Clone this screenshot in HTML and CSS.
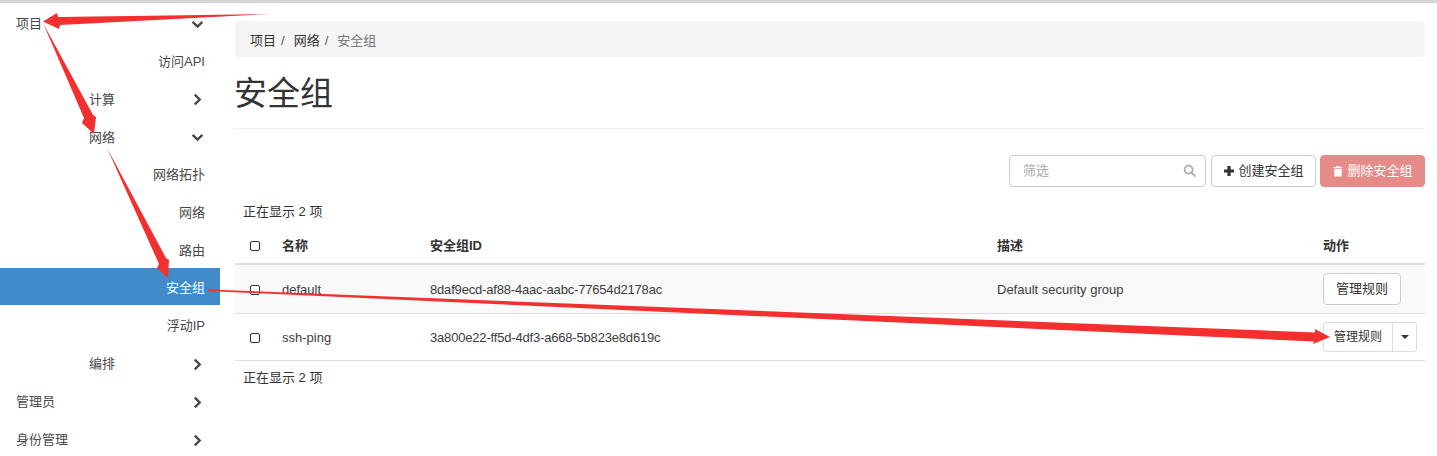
FILE: index.html
```html
<!DOCTYPE html>
<html lang="zh">
<head>
<meta charset="utf-8">
<title>安全组</title>
<link rel="stylesheet" href="styles.css">
</head>
<body>
<div class="page">
  <nav class="sidebar">
    <div class="row lvl1"><span class="label">项目</span><svg class="chev" viewBox="0 0 12 12"><path d="M1.5 3.5 6 8l4.5-4.5"/></svg></div>
    <div class="row lvl3"><span class="label">访问API</span></div>
    <div class="row lvl2"><span class="label">计算</span><svg class="chev" viewBox="0 0 12 12"><path d="M3.5 1.5 8 6l-4.5 4.5"/></svg></div>
    <div class="row lvl2"><span class="label">网络</span><svg class="chev" viewBox="0 0 12 12"><path d="M1.5 3.5 6 8l4.5-4.5"/></svg></div>
    <div class="row lvl3"><span class="label">网络拓扑</span></div>
    <div class="row lvl3"><span class="label">网络</span></div>
    <div class="row lvl3"><span class="label">路由</span></div>
    <div class="row lvl3 active"><span class="label">安全组</span></div>
    <div class="row lvl3"><span class="label">浮动IP</span></div>
    <div class="row lvl2"><span class="label">编排</span><svg class="chev" viewBox="0 0 12 12"><path d="M3.5 1.5 8 6l-4.5 4.5"/></svg></div>
    <div class="row lvl1"><span class="label">管理员</span><svg class="chev" viewBox="0 0 12 12"><path d="M3.5 1.5 8 6l-4.5 4.5"/></svg></div>
    <div class="row lvl1"><span class="label">身份管理</span><svg class="chev" viewBox="0 0 12 12"><path d="M3.5 1.5 8 6l-4.5 4.5"/></svg></div>
  </nav>
  <main class="main">
    <ol class="breadcrumb">
      <li>项目</li><li class="sep">/</li><li>网络</li><li class="sep">/</li><li class="current">安全组</li>
    </ol>
    <h1 class="title">安全组</h1>
    <div class="toolbar">
      <div class="search">
        <span class="placeholder">筛选</span>
        <svg class="search-icon" viewBox="0 0 14 14"><circle cx="5.6" cy="5.6" r="4"/><path d="m8.6 8.6 4 4"/></svg>
      </div>
      <button class="btn">
        <svg class="btn-icon" viewBox="0 0 12 12"><path class="solid" d="M4.4 1h3.2v3.4H11v3.2H7.6V11H4.4V7.6H1V4.4h3.4z"/></svg>创建安全组
      </button>
      <button class="btn danger">
        <svg class="btn-icon" viewBox="0 0 12 12"><path class="white" d="M4.4 1h3.2l.5 1H10.500v1.200H1.500V2h2.400zM2.300 4h7.400v6.500a1 1 0 0 1-1 1H3.300a1 1 0 0 1-1-1z"/></svg>删除安全组
      </button>
    </div>
    <div class="count">正在显示 2 项</div>
    <table class="grid">
      <thead>
        <tr>
          <th class="c-check"><span class="check"></span></th>
          <th class="c-name">名称</th>
          <th class="c-id">安全组ID</th>
          <th class="c-desc">描述</th>
          <th class="c-act">动作</th>
        </tr>
      </thead>
      <tbody>
        <tr class="odd">
          <td class="c-check txt"><span class="check"></span></td>
          <td class="txt">default</td>
          <td class="txt uuid">8daf9ecd-af88-4aac-aabc-77654d2178ac</td>
          <td class="txt">Default security group</td>
          <td><button class="btn rule">管理规则</button></td>
        </tr>
        <tr class="even">
          <td class="c-check txt"><span class="check"></span></td>
          <td class="txt">ssh-ping</td>
          <td class="txt uuid">3a800e22-ff5d-4df3-a668-5b823e8d619c</td>
          <td class="txt"></td>
          <td>
            <div class="split"><button class="split-main">管理规则</button><button class="split-caret"><span class="caret"></span></button></div>
          </td>
        </tr>
      </tbody>
    </table>
    <div class="count foot">正在显示 2 项</div>
  </main>
</div>
<svg class="arrows" viewBox="0 0 1437 456">
  <polygon points="43,21.500 57,13 58,17 270,14 60,25 59,29"/>
  <polygon points="43,23 84,118 82,123 94,134 96,117 93,115"/>
  <polygon points="107,148 159,264 157,268 168,278 169,260 166,258"/>
  <polygon points="208,289.500 1315,332.500 1315,329 1330,337 1313,344 1314,341.500 208,291"/>
</svg>
</body>
</html>
```
FILE: styles.css
```css
* { box-sizing: border-box; }
html, body { margin: 0; padding: 0; }
body {
  width: 1437px;
  height: 456px;
  overflow: hidden;
  background: #fff;
  color: #333;
  font: 13px/1.43 "Liberation Sans", "Noto Sans CJK SC", sans-serif;
  border-top: 3px solid #d4d4d4;
  position: relative;
}
.page { display: flex; align-items: flex-start; }

.sidebar { width: 220px; flex: none; color: #484848; }
.row { display: flex; align-items: center; height: 37.8px; padding-top: 5px; padding-right: 15px; overflow: hidden; }
.lvl1 { padding-left: 16px; justify-content: space-between; }
.lvl2 { padding-left: 89px; justify-content: space-between; }
.lvl3 { justify-content: flex-end; }
.active { background: #428bca; color: #fff; padding-top: 3px; }
.chev { width: 13px; height: 13px; margin-left: auto; margin-right: 1px; fill: none; stroke: #484848; stroke-width: 2.200; }

.main { width: 1190px; margin-left: 15px; flex: none; }
.breadcrumb {
  display: flex;
  gap: 5px;
  list-style: none;
  margin: 18px 0 0;
  padding: 4px 15px 0;
  height: 36px;
  align-items: center;
  background: #f5f5f5;
  border-radius: 4px;
}
.breadcrumb .sep { color: #555; margin-right: 4px; }
.breadcrumb .current { color: #777; }
.title {
  margin: 0 0 0 -1px;
  height: 72px;
  padding-top: 14px;
  font-size: 33px;
  font-weight: 400;
  line-height: 46px;
  border-bottom: 1px solid #eee;
  color: #333;
}
.toolbar { display: flex; justify-content: flex-end; gap: 5px; margin-top: 26px; }
.search {
  width: 197px;
  height: 32px;
  display: flex;
  align-items: center;
  justify-content: space-between;
  padding: 0 8px 0 13px;
  border: 1px solid #ccc;
  border-radius: 4px;
  color: #aaa;
}
.search-icon { width: 14px; height: 14px; fill: none; stroke: #aaa; stroke-width: 1.800; }
.btn {
  display: inline-flex;
  align-items: center;
  justify-content: center;
  height: 32px;
  width: 105px;
  padding: 0;
  border: 1px solid #ccc;
  border-radius: 4px;
  background: #fff;
  color: #333;
  font: inherit;
}
.btn-icon { width: 12px; height: 12px; margin-right: 3px; }
.solid { fill: #333; }
.white { fill: #fff; }
.danger { margin-left: -1px; background: #e58b89; border-color: #e58b89; color: #fff; }

.count { margin: 15px 0 0 8px; line-height: 19px; }
.foot { margin-top: 7px; }

.grid { width: 1190px; table-layout: fixed; border-collapse: collapse; margin-top: 8px; color: #3c3c3c; }
.grid th, .grid td { padding: 0 8px; text-align: left; vertical-align: middle; }
.grid th { height: 35px; font-weight: 700; border-bottom: 2px solid #ddd; color: #333; }
.grid td { border-bottom: 1px solid #ddd; }
.grid td.txt { padding-top: 3px; }
.uuid { letter-spacing: -0.18px; }
.odd td { height: 49px; background: #f9f9f9; }
.even td { height: 47px; }
.c-check { width: 39px; padding-left: 15px !important; padding-right: 0 !important; }
.c-name { width: 148px; }
.c-id { width: 567px; }
.c-desc { width: 326px; }
.c-act { width: 110px; }
.check {
  display: block;
  width: 10px;
  height: 10px;
  border: 1px solid #333;
  border-radius: 2px;
  background: #fff;
}
.rule { width: 78px; padding-top: 2px; }
.split { display: flex; width: 94px; height: 30px; }
.split-main, .split-caret {
  height: 30px;
  padding: 0;
  background: #fff;
  color: #333;
  font: inherit;
  font-size: 12px;
  border: 1px solid #ddd;
}
.split-main { width: 70px; border-radius: 3px 0 0 3px; padding-top: 2px; }
.split-caret { width: 25px; margin-left: -1px; border-radius: 0 3px 3px 0; display: flex; align-items: center; justify-content: center; }
.caret { width: 0; height: 0; border: 4px solid transparent; border-top-color: #333; border-bottom: 0; }

.arrows { position: absolute; left: 0; top: -3px; width: 1437px; height: 456px; pointer-events: none; }
.arrows polygon { fill: #f2302f; }
```
